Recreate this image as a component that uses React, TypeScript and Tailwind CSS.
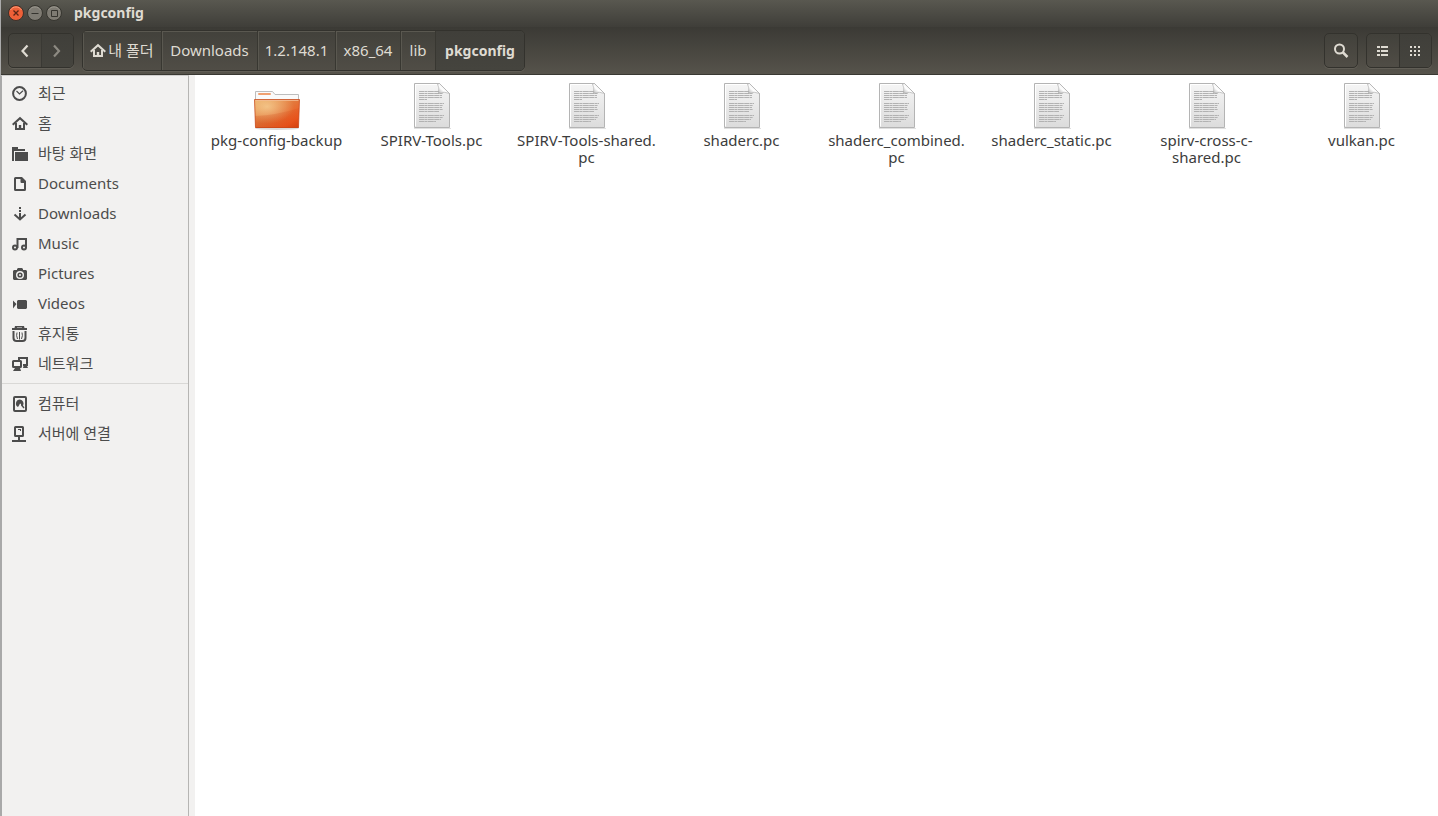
import type { ReactNode } from "react";

function Icon({ children }: { children: ReactNode }) {
  return (
    <svg viewBox="0 0 16 16" className="size-4 shrink-0" fill="currentColor" aria-hidden="true">
      {children}
    </svg>
  );
}

const house = (
  <>
    <path d="M.7 8.800 8 2.200l7.300 6.600" fill="none" stroke="currentColor" strokeWidth="2" />
    <path d="M4 7v6h8V7" fill="none" stroke="currentColor" strokeWidth="2" />
    <path d="M6.800 9h2.400v4H6.800z" />
  </>
);

const icons: Record<string, ReactNode> = {
  recent: (
    <g fill="none" stroke="currentColor">
      <circle cx="7.5" cy="7.5" r="6.4" strokeWidth="2" />
      <path d="M4.5 5 7.5 8 11 4.8" strokeWidth="1.2" />
    </g>
  ),
  home: house,
  desktop: <path d="M0 1h6v2h7v2H2v10H0zM3 6h13v9H3z" />,
  documents: (
    <path d="M3.500 1H10l4 4v8.500q0 1.500-1.500 1.500h-9Q2 15 2 13.500v-11Q2 1 3.500 1zM4 3v10h8V7H9.500q-1 0-1-1V3z" fillRule="evenodd" />
  ),
  downloads: (
    <>
      <path d="M7 1h2v2H7zM7 4h2v2H7zM7 7h2v5H7z" />
      <path d="m2.500 8.500 5.500 5 5.500-5" fill="none" stroke="currentColor" strokeWidth="2" />
    </>
  ),
  music: (
    <g fill="none" stroke="currentColor" strokeWidth="2">
      <circle cx="3" cy="11.500" r="2" />
      <circle cx="12" cy="11.500" r="2" />
      <path d="M5.500 12V3H14v9" />
    </g>
  ),
  pictures: (
    <>
      <path d="M5 3l1-1h4l1 1v1h3l1 1v8l-1 1H2l-1-1V5l1-1h3zM8 5a4 4 0 100 8 4 4 0 000-8z" fillRule="evenodd" />
      <path d="M8 6.400a2.600 2.600 0 100 5.200 2.600 2.600 0 000-5.200zm0 1.600a1 1 0 110 2 1 1 0 010-2z" fillRule="evenodd" />
    </>
  ),
  videos: <path d="M1 4.500 4.500 8 1 12.500zM6 4h8l1 1v7l-1 1H6l-1-1V5z" />,
  trash: (
    <>
      <path d="M3 0h9l.5 2H15v2H0V2h2.500zM5 1.500V2h5v-.5z" fillRule="evenodd" />
      <path d="M1.500 5v7q0 3 3 3h6q3 0 3-3V5" fill="none" stroke="currentColor" strokeWidth="2" />
      <path d="M5 6.500q-1 3 .5 6.500M7.500 6v7.500M10 6.500q1 3-.5 6.500" fill="none" stroke="currentColor" />
    </>
  ),
  network: (
    <>
      <path d="M7 4V2h8v7h-4" fill="none" stroke="currentColor" strokeWidth="2" />
      <rect x="1" y="5" width="8" height="6" rx=".5" fill="none" stroke="currentColor" strokeWidth="2" />
      <path d="M3 12h5l1 3H1zM12 8h2l2 4h-5z" />
    </>
  ),
  computer: (
    <>
      <rect x="2" y="1" width="12" height="14" rx="1" fill="none" stroke="currentColor" strokeWidth="2" />
      <path d="M8 3.500a4 4 0 00-2 7.500l1-1.500 1-2 1 .5v1.500l2.500 3 1-1-1.500-2A4 4 0 008 3.500z" />
    </>
  ),
  server: (
    <>
      <rect x="3" y="1" width="8" height="9" rx=".5" fill="none" stroke="currentColor" strokeWidth="2" />
      <path d="M6 3h3v2H8V4H6zM6 11h2v3h6v2H0v-2h6z" />
    </>
  ),
};

const places = [
  ["recent", "최근"],
  ["home", "홈"],
  ["desktop", "바탕 화면"],
  ["documents", "Documents"],
  ["downloads", "Downloads"],
  ["music", "Music"],
  ["pictures", "Pictures"],
  ["videos", "Videos"],
  ["trash", "휴지통"],
  ["network", "네트워크"],
];

const devices = [
  ["computer", "컴퓨터"],
  ["server", "서버에 연결"],
];

const crumbs = [
  { label: "내 폴더", width: "w-[79px]", home: true },
  { label: "Downloads", width: "w-24" },
  { label: "1.2.148.1", width: "w-[78px]" },
  { label: "x86_64", width: "w-[65px]" },
  { label: "lib", width: "w-[35px]" },
];

const files = [
  "SPIRV-Tools.pc",
  "SPIRV-Tools-shared.\npc",
  "shaderc.pc",
  "shaderc_combined.\npc",
  "shaderc_static.pc",
  "spirv-cross-c-\nshared.pc",
  "vulkan.pc",
];

function FolderArt() {
  return (
    <svg viewBox="0 0 48 48" className="size-12" aria-hidden="true">
      <defs>
        <linearGradient id="folder" x1="0" y1="0" x2="1" y2="1">
          <stop offset="0" stopColor="#e9a65c" />
          <stop offset=".5" stopColor="#e3763a" />
          <stop offset=".8" stopColor="#f05a20" />
          <stop offset="1" stopColor="#d8400c" />
        </linearGradient>
        <radialGradient id="folderGlow" cx=".28" cy=".25" r=".6">
          <stop offset="0" stopColor="#f8d99f" stopOpacity=".7" />
          <stop offset="1" stopColor="#f8d99f" stopOpacity="0" />
        </radialGradient>
        <linearGradient id="folderShade" x1="0" y1="0" x2="0" y2="1">
          <stop offset="0" stopColor="#c83a0c" stopOpacity=".12" />
          <stop offset="1" stopColor="#c83a0c" stopOpacity=".3" />
        </linearGradient>
      </defs>
      <ellipse cx="24" cy="45.500" rx="22" ry="1.500" fill="#000" opacity=".15" />
      <path d="M2.500 20V8.500h17L22 11.500h23.500V20z" fill="#fafafa" stroke="#bdbdbd" />
      <rect x="5" y="10" width="13" height="2" rx="1" fill="#f0a070" />
      <path d="M1.500 16.500h45L45.500 45H2.500z" fill="url(#folder)" />
      <path d="M1.500 16.500h45L45.500 45H2.500z" fill="url(#folderGlow)" />
      <path d="M2 33q22-1 44-8l-.5 20h-43z" fill="url(#folderShade)" />
      <path d="M1.500 16.500h45L45.500 44.500h-43z" fill="none" stroke="#c7471a" strokeOpacity=".75" />
      <path d="M2.500 17.500h43" stroke="#f4bd93" strokeOpacity=".8" />
    </svg>
  );
}

const textLines = [
  [8.5, 20], [10.5, 24], [12.5, 23], [14.5, 23], [16.5, 8],
  [20.5, 25], [22.5, 24], [24.5, 23], [26.5, 24], [28.5, 20],
  [32.5, 25], [34.5, 24], [36.5, 22], [38.5, 17],
];

function DocumentArt() {
  return (
    <svg viewBox="0 0 48 48" className="size-12" aria-hidden="true">
      <defs>
        <linearGradient id="paper" x1="0" y1="0" x2="0" y2="1">
          <stop offset="0" stopColor="#f5f5f5" />
          <stop offset="1" stopColor="#dcdcdc" />
        </linearGradient>
        <linearGradient id="fold" x1="0" y1="1" x2="1" y2="0">
          <stop offset="0" stopColor="#a8a8a8" />
          <stop offset=".4" stopColor="#fff" />
          <stop offset="1" stopColor="#d4d4d4" />
        </linearGradient>
      </defs>
      <path d="M6 45.500h37" stroke="#000" strokeOpacity=".12" />
      <path d="M6.500.5h25l10 10v34h-35z" fill="url(#paper)" stroke="#b4b4b4" />
      <path d="M7.500 43.500v-42h23" fill="none" stroke="#fff" />
      {textLines.map(([y, width]) => (
        <path key={y} d={`M11 ${y}h${width}`} stroke="#b2b2b2" strokeDasharray="5 .4 3 .4 6 .4" />
      ))}
      <path d="M29.500 1q2 3 1 9.500 6-2.500 11 0L31.500.5z" fill="url(#fold)" stroke="#a8a8a8" strokeWidth=".6" />
    </svg>
  );
}

function PlaceList({ items }: { items: string[][] }) {
  return (
    <ul>
      {items.map(([icon, label]) => (
        <li key={label}>
          <a href="#" className="flex h-[30px] items-center gap-2.5 pl-2.5">
            <Icon>{icons[icon]}</Icon>
            <span className="pb-0.5">{label}</span>
          </a>
        </li>
      ))}
    </ul>
  );
}

function FileItem({ name, children }: { name: string; children: ReactNode }) {
  return (
    <li className="w-[155px]">
      <a href="#" className="flex flex-col items-center">
        {children}
        <span className="mt-px text-center leading-[17px] whitespace-pre">{name}</span>
      </a>
    </li>
  );
}

const group =
  "flex overflow-hidden rounded-[5px] border border-[#33322d] bg-linear-to-b from-[#42413b] to-[#504d46] shadow-[0_1px_0_#615e56]";
const pressed = "bg-linear-to-b from-[#403f3a] to-[#45443e]";

export default function App() {
  return (
    <div className="flex min-h-screen flex-col bg-white font-['Noto_Sans','Noto_Sans_CJK_KR',sans-serif] text-[15px] text-[#3c3c3c]">
      <header className="border-l border-[#aaa] text-[#dfdbd2]">
        <div className="flex h-[27px] items-center bg-linear-to-b from-[#595850] to-[#3f3e39] pb-0.5 pl-[7px]">
          <div className="flex gap-[3px]">
            <button aria-label="Close" className="size-4 rounded-full">
              <svg viewBox="0 0 16 16" className="size-4">
                <circle cx="8" cy="8" r="7.5" fill="#ee6038" stroke="#3b302a" />
                <path d="M2.500 5a6.500 6.500 0 0111 0" fill="none" stroke="#ff9b77" />
                <path d="m5.500 5.500 5 5m0-5-5 5" stroke="#5a2516" strokeWidth="1.300" />
              </svg>
            </button>
            <button aria-label="Minimize" className="size-4 rounded-full">
              <svg viewBox="0 0 16 16" className="size-4">
                <circle cx="8" cy="8" r="7.5" fill="#7e7b73" stroke="#36352f" />
                <path d="M2.500 5a6.500 6.500 0 0111 0" fill="none" stroke="#99968d" />
                <path d="M4.500 8.500h7" stroke="#35342f" />
              </svg>
            </button>
            <button aria-label="Maximize" className="size-4 rounded-full">
              <svg viewBox="0 0 16 16" className="size-4">
                <circle cx="8" cy="8" r="7.5" fill="#7e7b73" stroke="#36352f" />
                <path d="M2.500 5a6.500 6.500 0 0111 0" fill="none" stroke="#99968d" />
                <path d="M5.500 5.500h6v6h-6z" fill="none" stroke="#35342f" />
              </svg>
            </button>
          </div>
          <h1 className="pl-3 text-[14px] leading-5 font-bold">pkgconfig</h1>
        </div>
        <div className="flex h-12 items-center border-b border-[#393832] bg-linear-to-b from-[#3b3a35] to-[#56534b] pr-1.5 pl-[7px]">
          <div className={`${group} h-[35px] w-[66px]`}>
            <button aria-label="Back" className="flex flex-1 items-center justify-center">
              <Icon>
                <path d="M10.500 2.500 5.500 8l5 5.500" fill="none" stroke="currentColor" strokeWidth="2.200" />
              </Icon>
            </button>
            <button
              aria-label="Forward"
              className={`${pressed} flex flex-1 items-center justify-center border-l border-[#3a3934] text-[#8d8a82]`}
            >
              <Icon>
                <path d="m5 2.500 5 5.500-5 5.500" fill="none" stroke="currentColor" strokeWidth="2.200" />
              </Icon>
            </button>
          </div>
          <nav aria-label="Path" className={`${group} ml-2 h-[41px]`}>
            {crumbs.map((crumb) => (
              <a
                key={crumb.label}
                href="#"
                className={`${crumb.width} flex items-center justify-center gap-0.5 border-r border-[#383731] whitespace-nowrap shadow-[inset_1px_1px_0_#5a5850]`}
              >
                {crumb.home && <Icon>{house}</Icon>}
                {crumb.label}
              </a>
            ))}
            <a
              href="#"
              aria-current="page"
              className={`${pressed} flex w-[88px] items-center justify-center text-[14px] font-bold`}
            >
              pkgconfig
            </a>
          </nav>
          <div className="ml-auto flex gap-2">
            <button aria-label="Search" className={`${group} h-[35px] w-[34px] items-center justify-center`}>
              <Icon>
                <circle cx="6.500" cy="6" r="4.500" fill="none" stroke="currentColor" strokeWidth="2" />
                <path d="m9.500 9 5 5" fill="none" stroke="currentColor" strokeWidth="2.500" />
              </Icon>
            </button>
            <div className={`${group} h-[35px] w-[66px]`}>
              <button aria-label="List view" className="flex flex-1 items-center justify-center">
                <Icon>
                  <path d="M2 3h3v2H2zM6 3h7v2H6zM2 7h3v2H2zM6 7h7v2H6zM2 11h3v2H2zM6 11h7v2H6z" />
                </Icon>
              </button>
              <button
                aria-label="Icon view"
                className={`${pressed} flex flex-1 items-center justify-center border-l border-[#33322d]`}
              >
                <Icon>
                  <path d="M3 3h2v2H3zM7 3h2v2H7zM11 3h2v2h-2zM3 7h2v2H3zM7 7h2v2H7zM11 7h2v2h-2zM3 11h2v2H3zM7 11h2v2H7zM11 11h2v2h-2z" />
                </Icon>
              </button>
            </div>
          </div>
        </div>
      </header>
      <div className="flex flex-1">
        <aside className="w-[189px] shrink-0 border-t border-r border-l-2 border-t-[#d0cfce] border-r-[#b6b5b3] border-l-[#a9a9a9] bg-[#f2f1f0] pt-[3px] text-[#4c4c4c]">
          <PlaceList items={places} />
          <hr className="mt-1 mb-[5px] border-t border-[#d9d8d6]" />
          <PlaceList items={devices} />
        </aside>
        <div className="w-1.5 shrink-0 bg-[#f2f1f0]" />
        <main className="flex-1 pt-2 pl-1">
          <ul className="-mr-1 flex flex-wrap">
            <FileItem name="pkg-config-backup">
              <FolderArt />
            </FileItem>
            {files.map((name) => (
              <FileItem key={name} name={name}>
                <DocumentArt />
              </FileItem>
            ))}
          </ul>
        </main>
      </div>
    </div>
  );
}
